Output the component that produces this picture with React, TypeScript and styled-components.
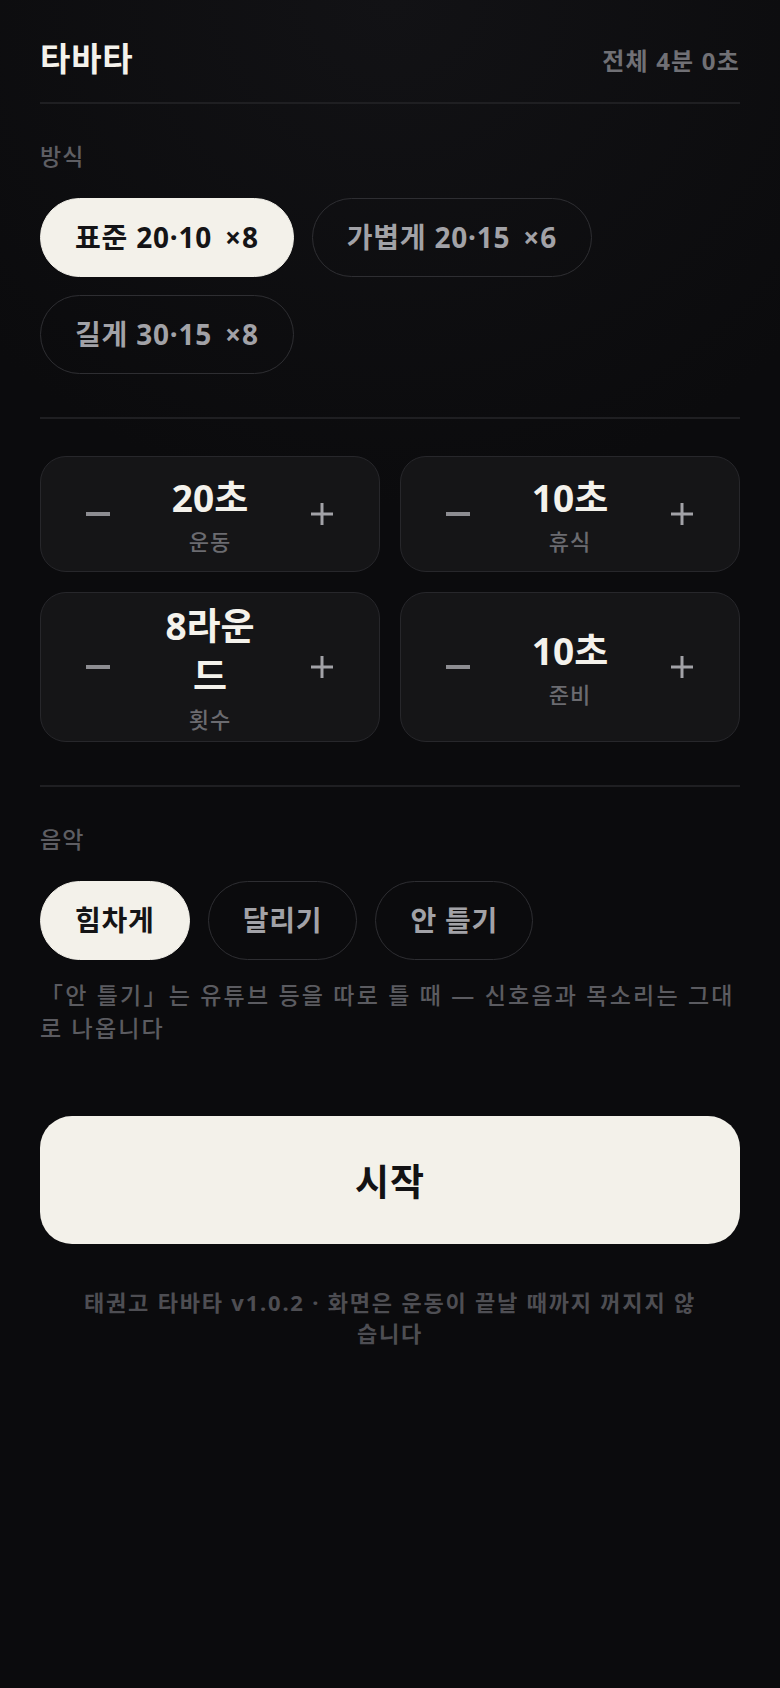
import React, { useState } from "react";
import styled, { createGlobalStyle } from "styled-components";

const GlobalStyle = createGlobalStyle`
  html, body {
    margin: 0;
    padding: 0;
    background: #0b0b0d;
  }
  body {
    font-family: "Noto Sans", "Noto Sans CJK KR", sans-serif;
    color: #f3f1ea;
    min-height: 1688px;
    background: radial-gradient(ellipse 70% 30% at 50% 0%, #121215 0%, #0b0b0d 100%);
  }
  * { box-sizing: border-box; }
`;

const Page = styled.main`
  padding: 38px 40px 60px;
  display: flex;
  flex-direction: column;
`;

const Header = styled.header`
  display: flex;
  align-items: center;
  justify-content: space-between;
  padding-bottom: 22px;
`;

const Title = styled.h1`
  margin: 0;
  font-size: 33px;
  line-height: 42px;
  font-weight: 700;
  letter-spacing: 0.8px;
  color: #f4f2ec;
`;

const Total = styled.span`
  font-size: 24px;
  font-weight: 700;
  letter-spacing: 1.2px;
  color: #707075;
`;

const Divider = styled.hr<{ $top?: number }>`
  border: none;
  height: 2px;
  background: #1f1f22;
  margin: ${(p) => p.$top ?? 0}px 0 0;
`;

const Section = styled.section`
  padding-top: 37px;
`;

const Label = styled.div`
  font-size: 23px;
  line-height: 31px;
  font-weight: 500;
  letter-spacing: 1px;
  color: #5e5e63;
  margin-bottom: 26px;
`;

const ChipRow = styled.div`
  display: flex;
  flex-wrap: wrap;
  column-gap: 18px;
  row-gap: 18px;
`;

const Chip = styled.button<{ $active?: boolean }>`
  font-family: inherit;
  font-size: 28px;
  line-height: 37px;
  font-weight: 700;
  letter-spacing: 0.8px;
  padding: 20px 34px;
  border-radius: 999px;
  border: 1px solid ${(p) => (p.$active ? "#f3f1ea" : "#2e2e32")};
  background: ${(p) => (p.$active ? "#f3f1ea" : "transparent")};
  color: ${(p) => (p.$active ? "#141416" : "#a2a2a7")};
  cursor: pointer;
  white-space: nowrap;
`;

const ChipMeta = styled.span<{ $gap: number }>`
  margin-left: ${(p) => p.$gap}px;
`;

const CardGrid = styled.div`
  display: grid;
  grid-template-columns: 1fr 1fr;
  gap: 20px;
  margin-top: 37px;
`;

const Card = styled.div`
  display: grid;
  grid-template-columns: 94px minmax(0, 1fr) 94px;
  column-gap: 10px;
  align-items: center;
  padding: 8px 10px;
  min-height: 116px;
  background: #151517;
  border: 1px solid #27272b;
  border-radius: 26px;
`;

const StepButton = styled.button`
  height: 80px;
  display: flex;
  align-items: center;
  justify-content: center;
  background: transparent;
  border: none;
  cursor: pointer;
  padding: 0;
`;

const ValueBox = styled.div`
  display: flex;
  flex-direction: column;
  align-items: center;
  text-align: center;
`;

const Value = styled.div`
  font-size: 37px;
  line-height: 50px;
  font-weight: 700;
  color: #f4f2ec;
`;

const ValueLabel = styled.div`
  margin-top: 4px;
  font-size: 22px;
  line-height: 28px;
  font-weight: 500;
  letter-spacing: 1px;
  color: #6b6b70;
`;

const Help = styled.p`
  margin: 19px 0 0;
  font-size: 23px;
  line-height: 33px;
  font-weight: 500;
  letter-spacing: 2.2px;
  color: #5b5b60;
`;

const StartButton = styled.button`
  margin-top: 71px;
  height: 128px;
  width: 100%;
  border: none;
  border-radius: 32px;
  background: #f3f1ea;
  color: #121214;
  font-family: inherit;
  font-size: 37px;
  font-weight: 700;
  letter-spacing: 1px;
  cursor: pointer;
`;

const Footer = styled.footer`
  margin-top: 43px;
  padding: 0 40px;
  text-align: center;
  font-size: 22px;
  line-height: 31px;
  font-weight: 700;
  letter-spacing: 1.8px;
  color: #4e4e53;
`;

const Minus = () => (
  <svg width="26" height="26" viewBox="0 0 26 26">
    <rect x="1" y="11" width="24" height="4" fill="#8d8d92" />
  </svg>
);

const Plus = () => (
  <svg width="26" height="26" viewBox="0 0 26 26">
    <rect x="2" y="11.5" width="22" height="3" fill="#a2a2a7" />
    <rect x="11.5" y="2" width="3" height="22" fill="#a2a2a7" />
  </svg>
);

type Stepper = { value: string; label: string };

const steppers: Stepper[] = [
  { value: "20초", label: "운동" },
  { value: "10초", label: "휴식" },
  { value: "8라운드", label: "횟수" },
  { value: "10초", label: "준비" },
];

const presets = [
  { name: "표준", time: "20·10", rounds: "×8" },
  { name: "가볍게", time: "20·15", rounds: "×6" },
  { name: "길게", time: "30·15", rounds: "×8" },
];

const musics = ["힘차게", "달리기", "안 틀기"];

export default function App() {
  const [preset, setPreset] = useState(0);
  const [music, setMusic] = useState(0);
  return (
    <>
      <GlobalStyle />
      <Page>
        <Header>
          <Title>타바타</Title>
          <Total>전체 4분 0초</Total>
        </Header>
        <Divider />
        <Section>
          <Label>방식</Label>
          <ChipRow>
            {presets.map((p, i) => (
              <Chip key={p.name} $active={preset === i} onClick={() => setPreset(i)}>
                {p.name}
                <ChipMeta $gap={8}>{p.time}</ChipMeta>
                <ChipMeta $gap={13}>{p.rounds}</ChipMeta>
              </Chip>
            ))}
          </ChipRow>
        </Section>
        <Divider $top={43} />
        <CardGrid>
          {steppers.map((s, i) => (
            <Card key={i}>
              <StepButton aria-label="감소">
                <Minus />
              </StepButton>
              <ValueBox>
                <Value>{s.value}</Value>
                <ValueLabel>{s.label}</ValueLabel>
              </ValueBox>
              <StepButton aria-label="증가">
                <Plus />
              </StepButton>
            </Card>
          ))}
        </CardGrid>
        <Divider $top={43} />
        <Section>
          <Label>음악</Label>
          <ChipRow>
            {musics.map((m, i) => (
              <Chip key={m} $active={music === i} onClick={() => setMusic(i)}>
                {m}
              </Chip>
            ))}
          </ChipRow>
          <Help>「안 틀기」는 유튜브 등을 따로 틀 때 — 신호음과 목소리는 그대로 나옵니다</Help>
        </Section>
        <StartButton>시작</StartButton>
        <Footer>태권고 타바타 v1.0.2 · 화면은 운동이 끝날 때까지 꺼지지 않습니다</Footer>
      </Page>
    </>
  );
}
